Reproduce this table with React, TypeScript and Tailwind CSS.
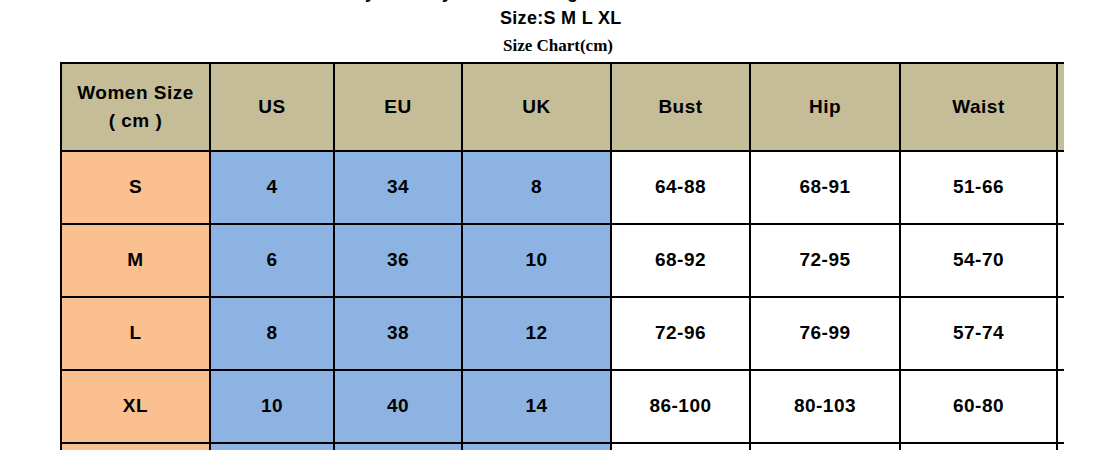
import React from 'react';

// Size chart data
const headers = ['US', 'EU', 'UK', 'Bust', 'Hip', 'Waist', ''];

const rows = [
  { size: 'S', us: '4', eu: '34', uk: '8', bust: '64-88', hip: '68-91', waist: '51-66' },
  { size: 'M', us: '6', eu: '36', uk: '10', bust: '68-92', hip: '72-95', waist: '54-70' },
  { size: 'L', us: '8', eu: '38', uk: '12', bust: '72-96', hip: '76-99', waist: '57-74' },
  { size: 'XL', us: '10', eu: '40', uk: '14', bust: '86-100', hip: '80-103', waist: '60-80' },
  { size: '', us: '', eu: '', uk: '', bust: '', hip: '', waist: '' },
];

const cols = 'grid grid-cols-[149px_124px_128px_149px_139px_150px_157px_60px]';
const cell = 'flex items-center justify-center border-r-2 border-b-2 border-black text-center';

const App: React.FC = () => {
  return (
    <div className="w-[1096px] h-[456px] bg-white overflow-hidden font-['Liberation_Sans',Arial,sans-serif] text-black">
      {/* Titles */}
      <div className="h-[62px] relative">
        <p className="absolute left-[330px] -top-[18px] whitespace-nowrap font-bold text-[18px] leading-[20px]">
          Body Stretchy Soft Slimming Fit
        </p>
        <p className="absolute left-[500px] top-[8px] font-bold text-[18px] leading-[20px] tracking-[0.3px]">Size:S M L XL</p>
        <p className="absolute left-[503px] top-[36px] font-bold text-[17px] leading-[20px] font-['Liberation_Serif','Times_New_Roman',serif]">
          Size Chart(cm)
        </p>
      </div>

      {/* Table */}
      <div className="ml-[60px] w-[1004px] h-[388px] overflow-hidden">
        <div className="border-t-2 border-l-2 border-black w-[1120px]">
          <div className={`${cols} h-[88px] bg-[#c4bd97] font-bold text-[19px] tracking-[0.5px]`}>
            <div className={`${cell} flex-col leading-[28px]`}>
              <span>Women Size</span>
              <span>( cm )</span>
            </div>
            {headers.map((h, i) => (
              <div key={i} className={cell}>{h}</div>
            ))}
          </div>
          {rows.map((r, i) => (
            <div key={i} className={`${cols} h-[73px] font-bold text-[19px] tracking-[0.5px]`}>
              <div className={`${cell} bg-[#fac090]`}>{r.size}</div>
              <div className={`${cell} bg-[#8db3e2]`}>{r.us}</div>
              <div className={`${cell} bg-[#8db3e2]`}>{r.eu}</div>
              <div className={`${cell} bg-[#8db3e2]`}>{r.uk}</div>
              <div className={cell}>{r.bust}</div>
              <div className={cell}>{r.hip}</div>
              <div className={cell}>{r.waist}</div>
              <div className={cell}></div>
            </div>
          ))}
        </div>
      </div>
    </div>
  );
};

export default App;
